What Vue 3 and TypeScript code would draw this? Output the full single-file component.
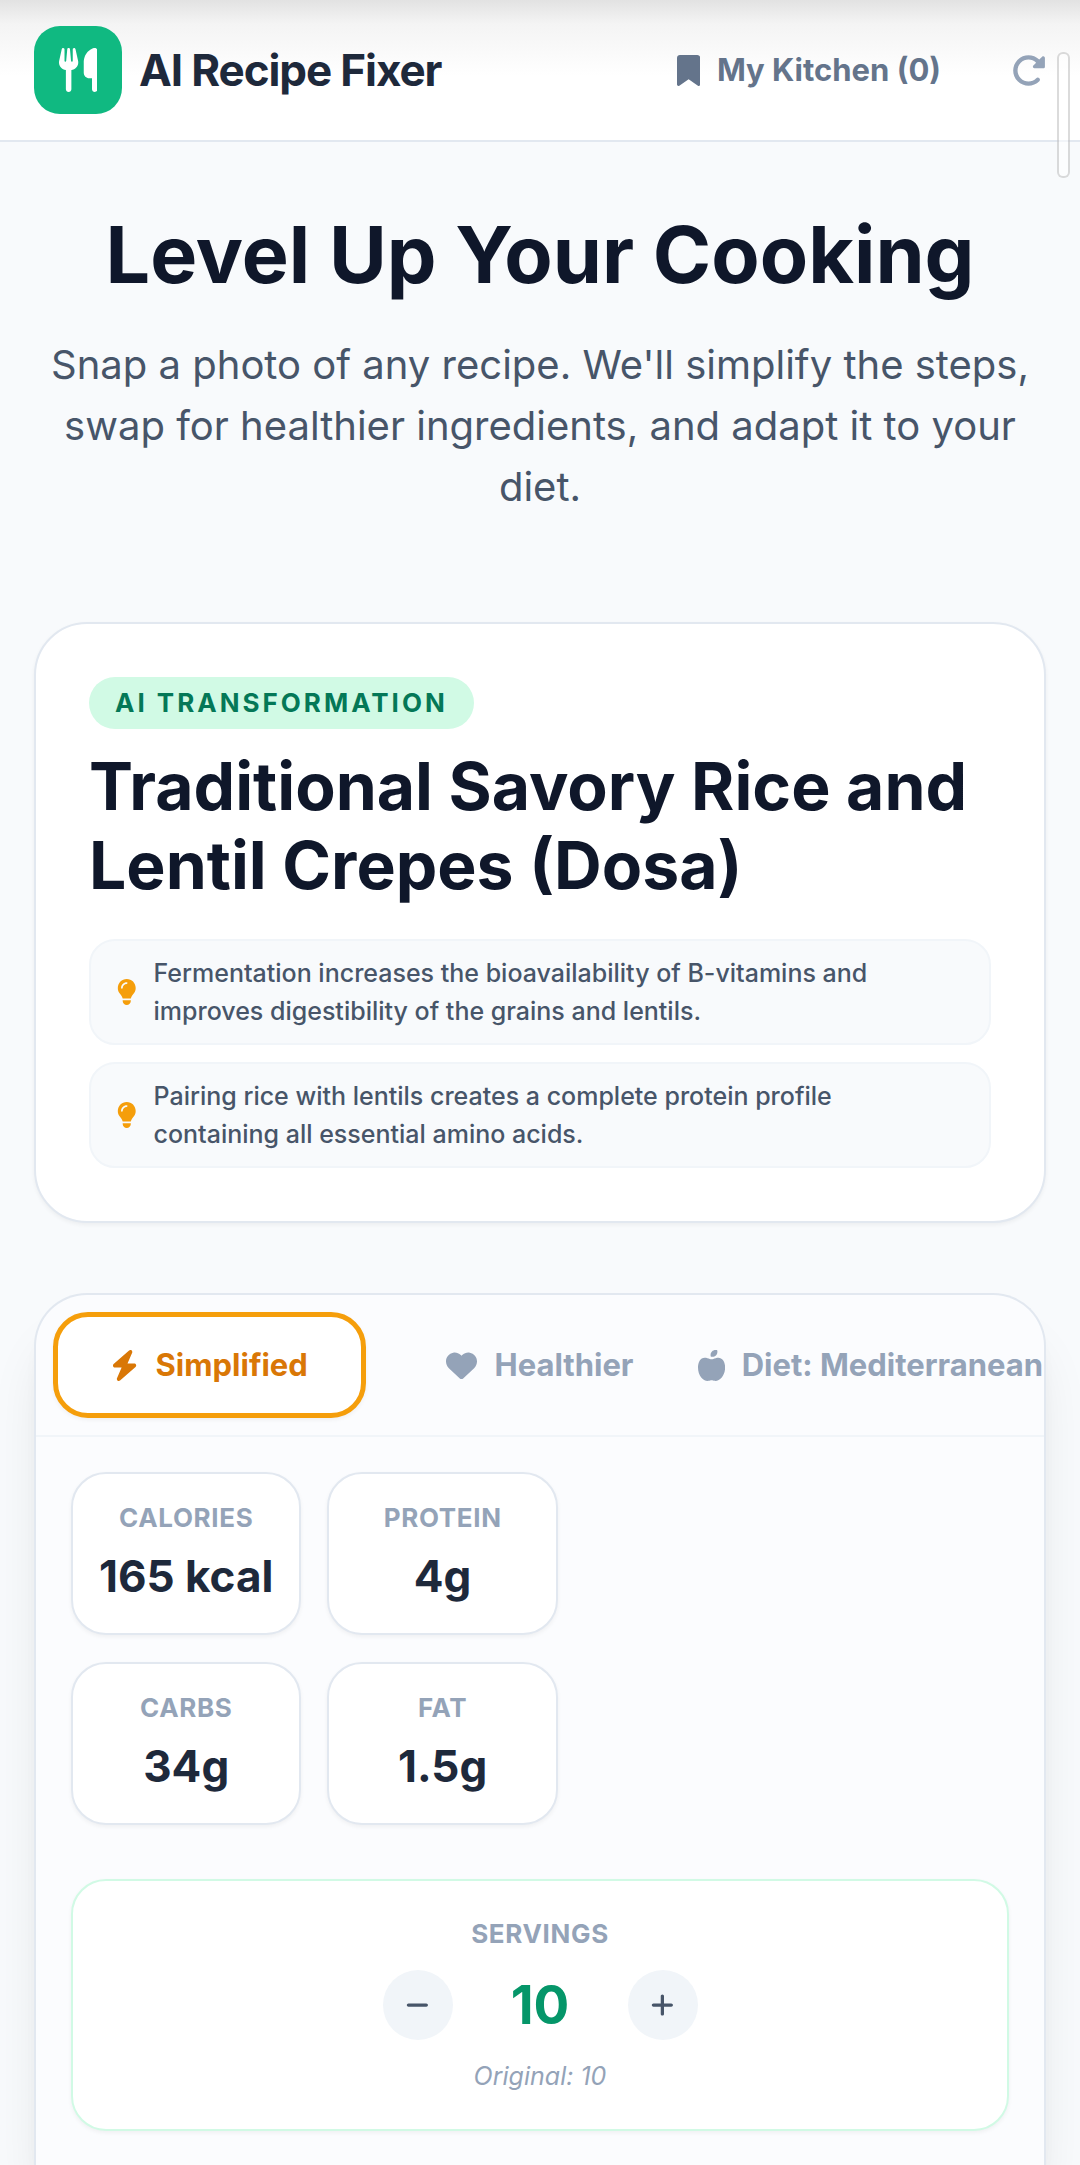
<script setup lang="ts">
import { ref } from 'vue'

interface Tab {
  id: string
  label: string
  viewBox: string
  path: string
}

const tabs: Tab[] = [
  {
    id: 'simplified',
    label: 'Simplified',
    viewBox: '0 0 448 512',
    path: 'M349.4 44.6c5.9-13.7 1.5-29.7-10.6-38.5s-28.6-8-39.9 1.8l-256 224c-10 8.8-13.6 22.9-8.9 35.3S50.7 288 64 288H175.5L98.6 467.4c-5.9 13.7-1.5 29.7 10.6 38.5s28.6 8 39.9-1.8l256-224c10-8.8 13.6-22.9 8.9-35.3s-16.6-20.7-30-20.7H272.5L349.4 44.6z',
  },
  {
    id: 'healthier',
    label: 'Healthier',
    viewBox: '0 0 512 512',
    path: 'M47.6 300.4L228.3 469.1c7.5 7 17.4 10.9 27.7 10.9s20.2-3.9 27.7-10.9L464.4 300.4c30.4-28.3 47.6-68 47.6-109.5v-5.8c0-69.9-50.5-129.5-119.4-141C347 36.5 300.6 51.4 268 84L256 96 244 84c-32.6-32.6-79-47.5-124.6-39.9C50.5 55.6 0 115.2 0 185.1v5.8c0 41.5 17.2 81.2 47.6 109.5z',
  },
  {
    id: 'diet',
    label: 'Diet: Mediterranean',
    viewBox: '0 0 448 512',
    path: 'M224 112c-8.8 0-16-7.2-16-16V80c0-44.2 35.8-80 80-80h16c8.8 0 16 7.2 16 16V32c0 44.2-35.8 80-80 80H224zM0 288c0-76.3 35.7-160 112-160c27.3 0 59.7 10.3 82.7 19.3c18.8 7.3 39.9 7.3 58.7 0c22.9-8.9 55.4-19.3 82.7-19.3c76.3 0 112 83.7 112 160c0 128-80 224-160 224c-16.5 0-38.1-6.6-51.5-11.3c-8.1-2.8-16.9-2.8-25 0c-13.4 4.7-35 11.3-51.5 11.3C80 512 0 416 0 288z',
  },
]

const tips: string[] = [
  'Fermentation increases the bioavailability of B-vitamins and improves digestibility of the grains and lentils.',
  'Pairing rice with lentils creates a complete protein profile containing all essential amino acids.',
]

const nutrition = [
  { label: 'Calories', value: '165 kcal' },
  { label: 'Protein', value: '4g' },
  { label: 'Carbs', value: '34g' },
  { label: 'Fat', value: '1.5g' },
]

const originalServings = 10
const active = ref('simplified')
const servings = ref(originalServings)

function changeServings(step: number): void {
  servings.value = Math.max(1, servings.value + step)
}
</script>

<template>
  <div class="page">
    <div class="scroll-thumb"></div>

    <header class="header">
      <div class="brand">
        <span class="logo">
          <svg class="logo-icon" viewBox="0 0 448 512" aria-hidden="true">
            <path d="M416 0C400 0 288 32 288 176V288c0 35.3 28.7 64 64 64h32V480c0 17.7 14.3 32 32 32s32-14.3 32-32V352 240 32c0-17.7-14.3-32-32-32zM64 16C64 7.8 57.9 1 49.7 .1S34.2 4.6 32.4 12.5L2.1 148.8C.7 155.1 0 161.5 0 167.9c0 45.9 35.1 83.6 80 87.7V480c0 17.7 14.3 32 32 32s32-14.3 32-32V255.6c44.9-4.1 80-41.8 80-87.7c0-6.4-.7-12.8-2.1-19.1L191.6 12.5c-1.8-8-9.3-13.3-17.4-12.4S160 7.8 160 16V150.2c0 5.4-4.4 9.8-9.8 9.8c-5.1 0-9.3-3.9-9.8-9L127.9 14.6C127.2 6.3 120.3 0 112 0s-15.2 6.3-15.9 14.6L83.7 151c-.5 5.1-4.7 9-9.8 9c-5.4 0-9.8-4.4-9.8-9.8V16zm48.3 152l-.3 0-.3 0 .3-.7 .3 .7z" />
          </svg>
        </span>
        <span class="brand-name">AI Recipe Fixer</span>
      </div>
      <nav class="actions">
        <button class="kitchen" type="button">
          <svg class="icon" viewBox="0 0 384 512" aria-hidden="true">
            <path d="M0 48V487.7C0 501.1 10.9 512 24.3 512c5 0 9.9-1.5 14-4.4L192 400 345.7 507.6c4.1 2.9 9 4.4 14 4.4c13.4 0 24.3-10.9 24.3-24.3V48c0-26.5-21.5-48-48-48H48C21.5 0 0 21.5 0 48z" />
          </svg>
          <span>My Kitchen (0)</span>
        </button>
        <button class="reset" type="button" aria-label="Start over">
          <svg class="reset-icon" viewBox="0 0 512 512" aria-hidden="true">
            <path d="M463.5 224H472c13.3 0 24-10.7 24-24V72c0-9.7-5.8-18.5-14.8-22.2s-19.3-1.7-26.2 5.2L413.4 96.6c-87.6-86.5-228.7-86.2-315.8 1c-87.5 87.5-87.5 229.3 0 316.8s229.3 87.5 316.8 0c12.5-12.5 12.5-32.8 0-45.3s-32.8-12.5-45.3 0c-62.5 62.5-163.8 62.5-226.3 0s-62.5-163.8 0-226.3c62.2-62.2 162.7-62.5 225.3-1L327 183c-6.9 6.9-8.9 17.2-5.2 26.2s12.5 14.8 22.2 14.8H463.5z" />
          </svg>
        </button>
      </nav>
    </header>

    <main class="main">
      <section class="hero">
        <h1>Level Up Your Cooking</h1>
        <p>Snap a photo of any recipe. We'll simplify the steps, swap for healthier ingredients, and adapt it to your diet.</p>
      </section>

      <section class="recipe">
        <span class="badge">AI Transformation</span>
        <h2>Traditional Savory Rice and Lentil Crepes (Dosa)</h2>
        <ul class="tips">
          <li v-for="tip in tips" :key="tip" class="tip">
            <svg class="bulb" viewBox="0 0 384 512" aria-hidden="true">
              <path d="M272 384c9.6-31.9 29.5-59.1 49.2-86.2l0 0c5.2-7.1 10.4-14.2 15.4-21.4c19.8-28.5 31.4-63 31.4-100.3C368 78.8 289.2 0 192 0S16 78.8 16 176c0 37.3 11.6 71.9 31.4 100.3c5 7.2 10.2 14.3 15.4 21.4l0 0c19.8 27.1 39.7 54.4 49.2 86.2H272zM192 512c44.2 0 80-35.8 80-80V416H112v16c0 44.2 35.8 80 80 80zM112 176c0 8.8-7.2 16-16 16s-16-7.2-16-16c0-61.9 50.1-112 112-112c8.8 0 16 7.2 16 16s-7.2 16-16 16c-44.2 0-80 35.8-80 80z" />
            </svg>
            <span>{{ tip }}</span>
          </li>
        </ul>
      </section>

      <section class="results">
        <div class="tabs" role="tablist">
          <button
            v-for="tab in tabs"
            :key="tab.id"
            class="tab"
            :class="{ active: active === tab.id }"
            type="button"
            role="tab"
            :aria-selected="active === tab.id"
            @click="active = tab.id"
          >
            <svg class="icon" :viewBox="tab.viewBox" aria-hidden="true"><path :d="tab.path" /></svg>
            <span>{{ tab.label }}</span>
          </button>
        </div>

        <div class="panel">
          <dl class="stats">
            <div v-for="item in nutrition" :key="item.label" class="stat">
              <dt class="caption">{{ item.label }}</dt>
              <dd>{{ item.value }}</dd>
            </div>
          </dl>

          <div class="servings">
            <span class="caption">Servings</span>
            <div class="stepper">
              <button class="round" type="button" aria-label="Fewer servings" @click="changeServings(-1)">
                <svg viewBox="0 0 448 512" aria-hidden="true">
                  <path d="M432 256c0 17.7-14.3 32-32 32L48 288c-17.7 0-32-14.3-32-32s14.3-32 32-32l352 0c17.7 0 32 14.3 32 32z" />
                </svg>
              </button>
              <output class="count">{{ servings }}</output>
              <button class="round" type="button" aria-label="More servings" @click="changeServings(1)">
                <svg viewBox="0 0 448 512" aria-hidden="true">
                  <path d="M256 80c0-17.7-14.3-32-32-32s-32 14.3-32 32V224H48c-17.7 0-32 14.3-32 32s14.3 32 32 32H192V432c0 17.7 14.3 32 32 32s32-14.3 32-32V288H400c17.7 0 32-14.3 32-32s-14.3-32-32-32H256V80z" />
                </svg>
              </button>
            </div>
            <span class="original">Original: {{ originalServings }}</span>
          </div>
        </div>
      </section>
    </main>
  </div>
</template>

<style>
body {
  margin: 0;
  background: #f8fafc;
}
</style>

<style scoped>
* {
  box-sizing: border-box;
  margin: 0;
  padding: 0;
}

button {
  border: 0;
  background: none;
  font: inherit;
  color: inherit;
  cursor: pointer;
}

svg {
  display: block;
  flex: none;
  fill: currentColor;
}

.page {
  position: relative;
  display: flex;
  flex-direction: column;
  min-height: 100vh;
  overflow: hidden;
  background: #f8fafc;
  color: #1e293b;
  font-family: Inter, "Liberation Sans", sans-serif;
}

.scroll-thumb {
  position: absolute;
  top: 52px;
  right: 10px;
  width: 13px;
  height: 126px;
  border: 2px solid rgba(0, 0, 0, 0.14);
  border-radius: 6px;
  background: rgba(255, 255, 255, 0.5);
}

.header {
  display: flex;
  align-items: center;
  justify-content: space-between;
  padding: 26px 34px;
  border-bottom: 2px solid #e2e8f0;
  background: linear-gradient(#e2e2e2, #f4f4f4 24px, #fff 76px);
}

.brand {
  display: flex;
  align-items: center;
  gap: 17px;
}

.logo {
  display: grid;
  place-items: center;
  width: 88px;
  height: 88px;
  border-radius: 26px;
  background: #10b981;
  color: #fff;
}

.logo-icon {
  height: 44px;
}

.brand-name {
  font-size: 44px;
  line-height: 62px;
  font-weight: 700;
  letter-spacing: -0.025em;
}

.actions {
  display: flex;
  align-items: center;
  gap: 70px;
}

.kitchen {
  display: flex;
  align-items: center;
  gap: 17px;
  font-size: 31px;
  line-height: 44px;
  font-weight: 700;
  color: #64748b;
}

.icon {
  height: 31px;
}

.reset {
  color: #94a3b8;
}

.reset-icon {
  height: 35px;
}

.main {
  display: flex;
  flex: 1;
  flex-direction: column;
  padding: 68px 34px 0;
}

.hero {
  margin-bottom: 105px;
  text-align: center;
}

.hero h1 {
  margin-bottom: 36px;
  font-size: 79px;
  line-height: 88px;
  font-weight: 700;
  color: #0f172a;
}

.hero p {
  font-size: 40px;
  line-height: 61px;
  color: #475569;
}

.recipe {
  margin-bottom: 70px;
  padding: 53px;
  border: 2px solid #e2e8f0;
  border-radius: 53px;
  background: #fff;
  box-shadow: 0 2px 4px rgba(0, 0, 0, 0.05);
}

.badge {
  display: block;
  width: fit-content;
  padding: 8px 26px;
  border-radius: 26px;
  background: #d1fae5;
  font-size: 26px;
  line-height: 36px;
  font-weight: 700;
  letter-spacing: 3px;
  text-transform: uppercase;
  color: #047857;
}

.recipe h2 {
  margin: 18px 0 34px;
  font-size: 66px;
  line-height: 79px;
  font-weight: 700;
  color: #0f172a;
}

.tips {
  display: grid;
  gap: 17px;
  list-style: none;
}

.tip {
  display: flex;
  align-items: center;
  gap: 17px;
  padding: 13px 26px;
  border: 2px solid #f1f5f9;
  border-radius: 26px;
  background: #f8fafc;
  font-size: 25px;
  line-height: 38px;
  font-weight: 500;
  color: #475569;
}

.bulb {
  height: 26px;
  color: #f59e0b;
}

.results {
  flex: 1;
  border: 2px solid #e2e8f0;
  border-bottom: 0;
  border-radius: 53px 53px 0 0;
  background: #fbfcfe;
  box-shadow: 0 44px 55px -11px rgba(0, 0, 0, 0.1), 0 18px 22px -13px rgba(0, 0, 0, 0.1);
  overflow: hidden;
}

.tabs {
  display: grid;
  grid-template-columns: repeat(3, minmax(0, 1fr));
  gap: 17px;
  padding: 17px;
  border-bottom: 2px solid #f1f5f9;
}

.tab {
  display: flex;
  align-items: center;
  justify-content: center;
  gap: 17px;
  padding: 26px 0;
  border: 5px solid transparent;
  border-radius: 35px;
  font-size: 31px;
  line-height: 44px;
  font-weight: 700;
  white-space: nowrap;
  color: #94a3b8;
}

.tab.active {
  border-color: #f59e0b;
  background: #fff;
  box-shadow: 0 2px 4px rgba(0, 0, 0, 0.05);
  color: #d97706;
}

.panel {
  padding: 35px;
}

.stats {
  display: grid;
  grid-template-columns: 1fr 1fr;
  gap: 27px 26px;
  width: max-content;
  margin-bottom: 54px;
}

.stat {
  padding: 26px;
  border: 2px solid #e2e8f0;
  border-radius: 35px;
  background: #fff;
  box-shadow: 0 2px 4px rgba(0, 0, 0, 0.05);
  text-align: center;
}

.caption {
  font-size: 26px;
  line-height: 36px;
  font-weight: 700;
  letter-spacing: 0.025em;
  text-transform: uppercase;
  color: #94a3b8;
}

.stat dd {
  margin-top: 9px;
  font-size: 44px;
  line-height: 62px;
  font-weight: 700;
}

.servings {
  display: flex;
  flex-direction: column;
  align-items: center;
  gap: 18px;
  padding: 35px;
  border: 2px solid #d1fae5;
  border-radius: 35px;
  background: #fff;
  box-shadow: 0 2px 4px rgba(0, 0, 0, 0.05);
}

.stepper {
  display: flex;
  align-items: center;
  gap: 35px;
}

.round {
  display: grid;
  place-items: center;
  width: 70px;
  height: 70px;
  border-radius: 50%;
  background: #f1f5f9;
  color: #475569;
}

.round svg {
  height: 26px;
}

.count {
  min-width: 105px;
  font-size: 53px;
  line-height: 70px;
  font-weight: 700;
  text-align: center;
  color: #059669;
}

.original {
  font-size: 25px;
  line-height: 36px;
  font-style: italic;
  color: #94a3b8;
}
</style>
